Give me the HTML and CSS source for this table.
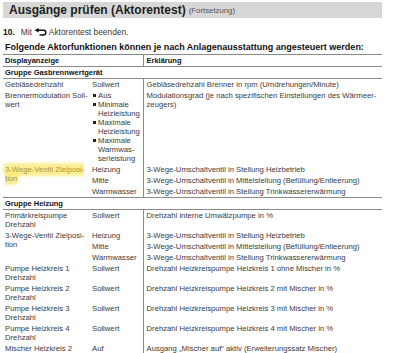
FILE: index.html
```html
<!DOCTYPE html>
<html lang="de">
<head>
<meta charset="utf-8">
<link rel="stylesheet" href="styles.css">
</head>
<body>
<div class="page">
  <div class="titlebar"><span class="title">Ausgänge prüfen (Aktorentest)</span><span class="sub">(Fortsetzung)</span></div>
  <p class="step"><b class="num">10.</b><span>Mit</span><svg class="back" width="13" height="9" viewBox="0 0 13 9"><path d="M4.5 2.2 H9.5 Q11.8 2.2 11.8 4.6 Q11.8 7 9.5 7 H5.5" fill="none" stroke="#111" stroke-width="1.5"/><path d="M0.4 2.2 L4.8 -0.1 V4.5 Z" fill="#111"/></svg><span>Aktorentest beenden.</span></p>
  <p class="intro">Folgende Aktorfunktionen können je nach Anlagenausstattung angesteuert werden:</p>
  <table class="grid">
    <colgroup><col class="c1"><col class="c2"><col class="c3"></colgroup>
    <tr class="head"><th colspan="2">Displayanzeige</th><th class="sep">Erklärung</th></tr>
    <tr class="group"><th colspan="3">Gruppe Gasbrennwertgerät</th></tr>
    <tr><td>Gebläsedrehzahl</td><td>Sollwert</td><td class="sep">Gebläsedrehzahl Brenner in rpm (Umdrehungen/Minute)</td></tr>
    <tr><td>Brennermodulation Soll-<br>wert</td><td><ul class="bul"><li>Aus</li><li>Minimale<br>Heizleistung</li><li>Maximale<br>Heizleistung</li><li>Maximale<br>Warmwas-<br>serleistung</li></ul></td><td class="sep">Modulationsgrad (je nach spezifischen Einstellungen des Wärmeer-<br>zeugers)</td></tr>
    <tr><td rowspan="3"><span class="mark">3-Wege-Ventil Zielposi-<br>tion</span></td><td>Heizung</td><td class="sep">3-Wege-Umschaltventil in Stellung Heizbetrieb</td></tr>
    <tr><td>Mitte</td><td class="sep">3-Wege-Umschaltventil in Mittelstellung (Befüllung/Entleerung)</td></tr>
    <tr><td>Warmwasser</td><td class="sep">3-Wege-Umschaltventil in Stellung Trinkwassererwärmung</td></tr>
    <tr class="group"><th colspan="3">Gruppe Heizung</th></tr>
    <tr><td>Primärkreispumpe<br>Drehzahl</td><td>Sollwert</td><td class="sep">Drehzahl interne Umwälzpumpe in %</td></tr>
    <tr><td rowspan="3">3-Wege-Ventil Zielposi-<br>tion</td><td>Heizung</td><td class="sep">3-Wege-Umschaltventil in Stellung Heizbetrieb</td></tr>
    <tr><td>Mitte</td><td class="sep">3-Wege-Umschaltventil in Mittelstellung (Befüllung/Entleerung)</td></tr>
    <tr><td>Warmwasser</td><td class="sep">3-Wege-Umschaltventil in Stellung Trinkwassererwärmung</td></tr>
    <tr><td>Pumpe Heizkreis 1<br>Drehzahl</td><td>Sollwert</td><td class="sep">Drehzahl Heizkreispumpe Heizkreis 1 ohne Mischer in %</td></tr>
    <tr><td>Pumpe Heizkreis 2<br>Drehzahl</td><td>Sollwert</td><td class="sep">Drehzahl Heizkreispumpe Heizkreis 2 mit Mischer in %</td></tr>
    <tr><td>Pumpe Heizkreis 3<br>Drehzahl</td><td>Sollwert</td><td class="sep">Drehzahl Heizkreispumpe Heizkreis 3 mit Mischer in %</td></tr>
    <tr><td>Pumpe Heizkreis 4<br>Drehzahl</td><td>Sollwert</td><td class="sep">Drehzahl Heizkreispumpe Heizkreis 4 mit Mischer in %</td></tr>
    <tr><td>Mischer Heizkreis 2</td><td>Auf</td><td class="sep">Ausgang „Mischer auf“ aktiv (Erweiterungssatz Mischer)</td></tr>
  </table>
</div>
</body>
</html>
```
FILE: styles.css
```css
html, body {
  margin: 0;
  padding: 0;
  background: #fff;
  overflow: hidden;
}
.page {
  width: 379px;
  padding: 2px 0 0 3px;
  font-family: "Liberation Sans", Arial, sans-serif;
  font-size: 9px;
  line-height: 9px;
  color: #3a3a3a;
}
.titlebar {
  background: #d7d7d7;
  height: 16px;
  display: flex;
  align-items: center;
  padding-left: 6px;
  gap: 3px;
  white-space: nowrap;
}
.title {
  font-weight: bold;
  font-size: 12px;
  color: #1e1e1e;
}
.sub {
  font-size: 7.8px;
  color: #555;
  padding-top: 1px;
}
.step {
  margin: 10px 0 0 0;
  display: flex;
  align-items: center;
  gap: 2px;
  font-size: 8.4px;
  white-space: nowrap;
}
.num {
  color: #111;
  margin-right: 4px;
}
.intro {
  margin: 6px 0 0 2px;
  font-weight: bold;
  color: #111;
  white-space: nowrap;
}
.grid {
  margin-top: 2px;
  width: 379px;
  border-collapse: collapse;
  table-layout: fixed;
  font-size: 7.7px;
}
.c1 { width: 87px; }
.c2 { width: 53px; }
.c3 { width: 239px; }
.grid td, .grid th {
  padding: 1px 2px;
  vertical-align: top;
  text-align: left;
  white-space: nowrap;
}
.grid th {
  font-weight: bold;
  font-size: 7.5px;
  color: #111;
}
.grid .sep {
  border-left: 1px solid #8a8a8a;
  padding-left: 3px;
}
.head th {
  border-top: 1px solid #8a8a8a;
  border-bottom: 1px solid #8a8a8a;
}
.group th {
  border-top: 1px solid #8a8a8a;
  border-bottom: 1px solid #8a8a8a;
}
.bul {
  list-style: none;
  margin: 0;
  padding: 0;
}
.bul li {
  position: relative;
  padding-left: 6px;
}
.bul li::before {
  content: "";
  position: absolute;
  left: 1px;
  top: 3px;
  width: 3px;
  height: 3px;
  background: #222;
}
.mark {
  color: #a8953a;
  background: rgba(250, 232, 110, 0.75);
  box-shadow: 0 0 3px 2px rgba(250, 232, 110, 0.75);
  border-radius: 3px;
}
```
